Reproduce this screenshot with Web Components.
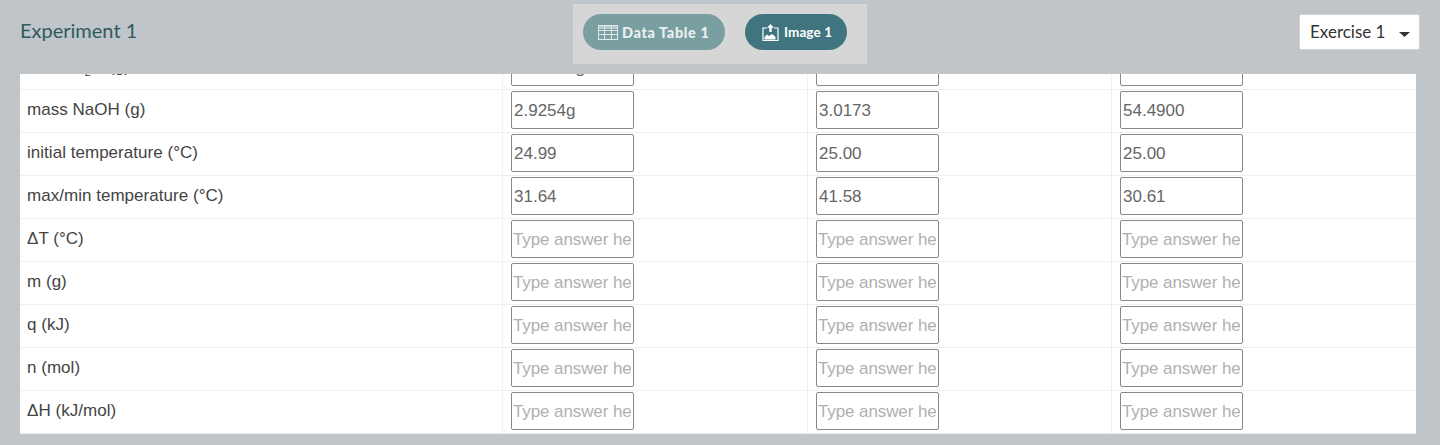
<!DOCTYPE html>
<html>
<head>
<meta charset="utf-8">
<title>Experiment 1</title>
<style>
    html, body { margin: 0; height: 100%; background: #bfc5c8; overflow: hidden; }
</style>
</head>
<body>
<exp-page>
    <exp-header title="Experiment 1" exercise="Exercise 1">
        <exp-tab icon="table" bold>Data Table 1</exp-tab>
        <exp-tab icon="image" active>Image 1</exp-tab>
    </exp-header>
    <exp-table>
        <exp-row><span slot="label">mass H<sub style="font-size:11px;line-height:0">2</sub>O (g)</span>
            <exp-answer value="50.0000g"></exp-answer><exp-answer value="50.00"></exp-answer><exp-answer value="50.00"></exp-answer></exp-row>
        <exp-row><span slot="label">mass NaOH (g)</span>
            <exp-answer value="2.9254g"></exp-answer><exp-answer value="3.0173"></exp-answer><exp-answer value="54.4900"></exp-answer></exp-row>
        <exp-row><span slot="label">initial temperature (°C)</span>
            <exp-answer value="24.99"></exp-answer><exp-answer value="25.00"></exp-answer><exp-answer value="25.00"></exp-answer></exp-row>
        <exp-row><span slot="label">max/min temperature (°C)</span>
            <exp-answer value="31.64"></exp-answer><exp-answer value="41.58"></exp-answer><exp-answer value="30.61"></exp-answer></exp-row>
        <exp-row><span slot="label">ΔT (°C)</span><exp-answer></exp-answer><exp-answer></exp-answer><exp-answer></exp-answer></exp-row>
        <exp-row><span slot="label">m (g)</span><exp-answer></exp-answer><exp-answer></exp-answer><exp-answer></exp-answer></exp-row>
        <exp-row><span slot="label">q (kJ)</span><exp-answer></exp-answer><exp-answer></exp-answer><exp-answer></exp-answer></exp-row>
        <exp-row><span slot="label">n (mol)</span><exp-answer></exp-answer><exp-answer></exp-answer><exp-answer></exp-answer></exp-row>
        <exp-row><span slot="label">ΔH (kJ/mol)</span><exp-answer></exp-answer><exp-answer></exp-answer><exp-answer></exp-answer></exp-row>
    </exp-table>
</exp-page>

<script>
class ShadowElement extends HTMLElement {
    $style() {
        return '';
    }

    $template() {
        return '';
    }

    connectedCallback() {
        if (this.shadowRoot) return;
        this.attachShadow({mode: 'open'});
        this.shadowRoot.innerHTML = '<style>' + this.$style() + '</style>' + this.$template();
    }
}

class ExpPage extends ShadowElement {
    $style() {
        return `:host { display: flex; flex-direction: column; height: 445px; }`;
    }

    $template() {
        return '<slot></slot>';
    }
}

class ExpHeader extends ShadowElement {
    $style() {
        return `
            :host { display: grid; grid-template-columns: 1fr auto 1fr; align-items: start; height: 74px; padding: 0 20px; box-sizing: border-box; }
            h1 { margin: 17px 0 0; font: 400 20px/26px Lato, sans-serif; color: #2f5a60; }
            .tabs { display: flex; gap: 20px; margin-top: 4px; padding: 10px 20px 14px 10px; background: #d6d6d6; }
            .select { justify-self: end; display: flex; align-items: center; box-sizing: border-box; width: 121px; height: 36px; margin-top: 14px; padding: 0 9px 2px 10px;
                background: #fff; border: 1px solid #d0d4d6; border-radius: 2px; font: 400 17px Lato, sans-serif; color: #333; }
            .select span { flex: 1; }
            svg { display: block; margin-top: 6px; }
        `;
    }

    $template() {
        return `
            <h1>${this.getAttribute('title')}</h1>
            <div class="tabs"><slot></slot></div>
            <div class="select"><span>${this.getAttribute('exercise')}</span>
                <svg width="11" height="5" viewBox="0 0 11 5"><path d="M0 0h11L5.500 5z" fill="#333"/></svg>
            </div>
        `;
    }
}

const TAB_ICONS = {
    table: `<svg width="20" height="15" viewBox="0 0 20 15" fill="none" stroke="#dfe8e8" stroke-width="1">
        <rect x=".5" y=".5" width="19" height="14"/>
        <path d="M0 1h20v3H0z" fill="#dfe8e8" fill-opacity=".6" stroke="none"/>
        <path d="M.5 5.500h19M.5 9.500h19M6.500 1v13M13.500 1v13"/></svg>`,
    image: `<svg width="17" height="17" viewBox="0 0 17 17" fill="none">
        <path d="M5 4H1v12.500h15V4h-4" stroke="#fff" stroke-width="1.200"/>
        <path d="M8.500 0l3.500 3.800H9.700v4.200H7.300V3.800H5z" fill="#fff"/>
        <path d="M2.500 15.500v-2.500l2.500-2.500 2 1.500 3-2 2 1.500 1.500 1.500v2.500z" fill="#fff"/></svg>`
};

class ExpTab extends ShadowElement {
    $style() {
        return `
            :host { display: flex; align-items: center; width: 142px; height: 36px; padding: 0 0 0 15px; box-sizing: border-box; border-radius: 18px; white-space: nowrap;
                background: #7a9fa1; color: #e9efef; font: 900 14.500px Lato, sans-serif; letter-spacing: .6px; gap: 4px; }
            :host([active]) { width: 102px; background: #40757f; color: #fff; font: 700 13.500px Lato, sans-serif; letter-spacing: .1px; padding: 0 0 0 17px; gap: 5px; }
            svg { display: block; }
        `;
    }

    $template() {
        return TAB_ICONS[this.getAttribute('icon')] + '<slot></slot>';
    }
}

class ExpTable extends ShadowElement {
    $style() {
        return `
            :host { display: block; flex: none; width: 1396px; height: 360px; margin-left: 20px; background: #fff; overflow: hidden; }
            .inner { margin-top: -28px; }
        `;
    }

    $template() {
        return '<div class="inner"><slot></slot></div>';
    }
}

class ExpRow extends ShadowElement {
    $style() {
        return `
            :host { display: grid; grid-template-columns: 483px 305px 304px 304px; height: 43px; box-sizing: border-box; border-top: 1px solid #f0f0f0; }
            :host(:last-child) { height: 44px; border-bottom: 1px solid #ecedee; }
            .label { display: flex; padding: 10px 0 0 7px; border-right: 1px solid #f0f0f0; font: 400 17px/20px "Liberation Sans", Arial, sans-serif; letter-spacing: .03px; color: #444; }
        `;
    }

    $template() {
        return '<div class="label"><slot name="label"></slot></div><slot></slot>';
    }
}

class ExpAnswer extends ShadowElement {
    $style() {
        return `
            :host { display: block; padding: 1px 0 0 8px; border-right: 1px solid #f0f0f0; }
            :host(:last-child) { border-right: 0; }
            input { display: block; box-sizing: border-box; width: 123px; height: 38px; margin: 0; padding: 2px 2px 0; background: #fff; border: 1px solid #888; border-radius: 2px;
                font: 400 17px "Liberation Sans", Arial, sans-serif; color: #666; outline: 0; }
            input:placeholder-shown { padding-left: 1px; }
            input::placeholder { color: #b0b0b0; opacity: 1; letter-spacing: -.1px; }
        `;
    }

    $template() {
        return '<input type="text" placeholder="Type answer here">';
    }

    connectedCallback() {
        super.connectedCallback();
        this.shadowRoot.querySelector('input').value = this.getAttribute('value') || '';
    }
}

customElements.define('exp-page', ExpPage);
customElements.define('exp-header', ExpHeader);
customElements.define('exp-tab', ExpTab);
customElements.define('exp-table', ExpTable);
customElements.define('exp-row', ExpRow);
customElements.define('exp-answer', ExpAnswer);
</script>
</body>
</html>
